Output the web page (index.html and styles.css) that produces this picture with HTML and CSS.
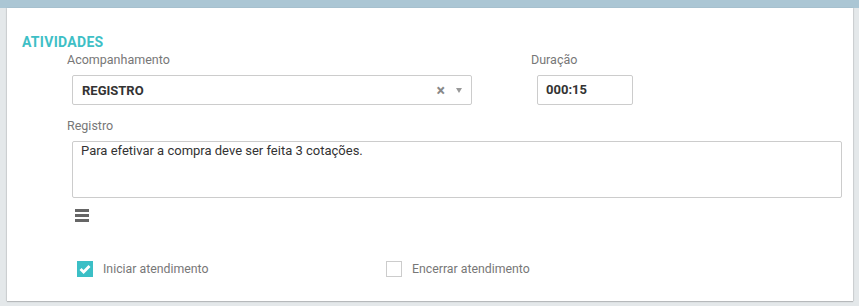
FILE: index.html
```html
<!DOCTYPE html>
<html lang="pt-BR">
<head>
  <meta charset="UTF-8">
  <title>Atividades</title>
  <link rel="stylesheet" href="styles.css">
</head>
<body>
  <div class="topbar"></div>
  <div class="panel">
    <h3 class="section-title">ATIVIDADES</h3>
    <div class="form">
      <div class="row">
        <div class="field field-acomp">
          <label class="field-label">Acompanhamento</label>
          <div class="select">
            <span class="select-value">REGISTRO</span>
            <span class="select-clear">&times;</span>
            <span class="select-arrow"></span>
          </div>
        </div>
        <div class="field field-duracao">
          <label class="field-label">Duração</label>
          <div class="input">000:15</div>
        </div>
      </div>
      <div class="field field-registro">
        <label class="field-label">Registro</label>
        <div class="textarea">Para efetivar a compra deve ser feita 3 cotações.</div>
      </div>
      <div class="menu-icon">
        <span></span><span></span><span></span>
      </div>
      <div class="checks">
        <label class="check check-first">
          <span class="box checked">
            <svg width="12" height="10" viewBox="0 0 12 10"><path d="M1.5 5 L4.6 8 L10.5 2" fill="none" stroke="#fff" stroke-width="2.8"/></svg>
          </span>
          Iniciar atendimento
        </label>
        <label class="check">
          <span class="box"></span>
          Encerrar atendimento
        </label>
      </div>
    </div>
  </div>
</body>
</html>
```

FILE: styles.css
```css
body {
  margin: 0;
  background-color: #e4e8ea;
  font-family: Roboto, "Liberation Sans", Arial, sans-serif;
  height: 306px;
  overflow: hidden;
}

.topbar {
  height: 8px;
  background-color: #abc6d4;
}

.panel {
  margin: 0 6px 0 7px;
  height: 293px;
  box-sizing: border-box;
  background-color: #fff;
  box-shadow: 0 1px 1px rgba(0, 0, 0, 0.18), -1px 0 1px rgba(0, 0, 0, 0.08), 1px 0 1px rgba(0, 0, 0, 0.08);
  padding: 26px 0 0 15px;
}

.section-title {
  margin: 0;
  font-size: 14px;
  line-height: 17px;
  letter-spacing: 0.3px;
  font-weight: bold;
  color: #3ebfc6;
}

.form {
  margin-left: 45px;
}

.row {
  display: flex;
}

.field-label {
  display: block;
  font-size: 12.5px;
  line-height: 16px;
  color: #777;
  margin-top: 1px;
}

.field-acomp {
  width: 464px;
}

.select {
  display: flex;
  align-items: center;
  margin: 7px 0 0 5px;
  width: 400px;
  height: 30px;
  box-sizing: border-box;
  border: 1px solid #ccc;
  border-radius: 2px;
  padding: 0 9px;
}

.select-value {
  flex: 1;
  font-size: 13px;
  font-weight: bold;
  color: #333;
}

.select-clear {
  color: #888;
  font-size: 16px;
  font-weight: bold;
  margin-right: 11px;
}

.select-arrow {
  width: 0;
  height: 0;
  border-left: 3px solid transparent;
  border-right: 3px solid transparent;
  border-top: 5px solid #999;
}

.input {
  margin: 7px 0 0 6px;
  width: 96px;
  height: 30px;
  box-sizing: border-box;
  border: 1px solid #ccc;
  border-radius: 2px;
  padding: 0 8px;
  font-size: 13px;
  font-weight: bold;
  line-height: 28px;
  color: #333;
}

.field-registro {
  margin-top: 13px;
}

.textarea {
  margin: 7px 0 0 5px;
  width: 770px;
  height: 57px;
  box-sizing: border-box;
  border: 1px solid #ccc;
  border-radius: 2px;
  padding: 1px 8px;
  font-size: 13px;
  line-height: 16px;
  color: #333;
}

.menu-icon {
  display: flex;
  flex-direction: column;
  gap: 2px;
  width: 14px;
  margin: 11px 0 0 8px;
}

.menu-icon span {
  height: 3px;
  background-color: #666;
}

.checks {
  display: flex;
  margin: 39px 0 0 10px;
}

.check {
  display: flex;
  align-items: center;
  font-size: 12.3px;
  color: #777;
}

.check-first {
  width: 309px;
}

.box {
  display: flex;
  align-items: center;
  justify-content: center;
  width: 16px;
  height: 16px;
  box-sizing: border-box;
  border: 1px solid #ccc;
  margin-right: 10px;
}

.box.checked {
  background-color: #3bbfc6;
  border-color: #3bbfc6;
}
```
